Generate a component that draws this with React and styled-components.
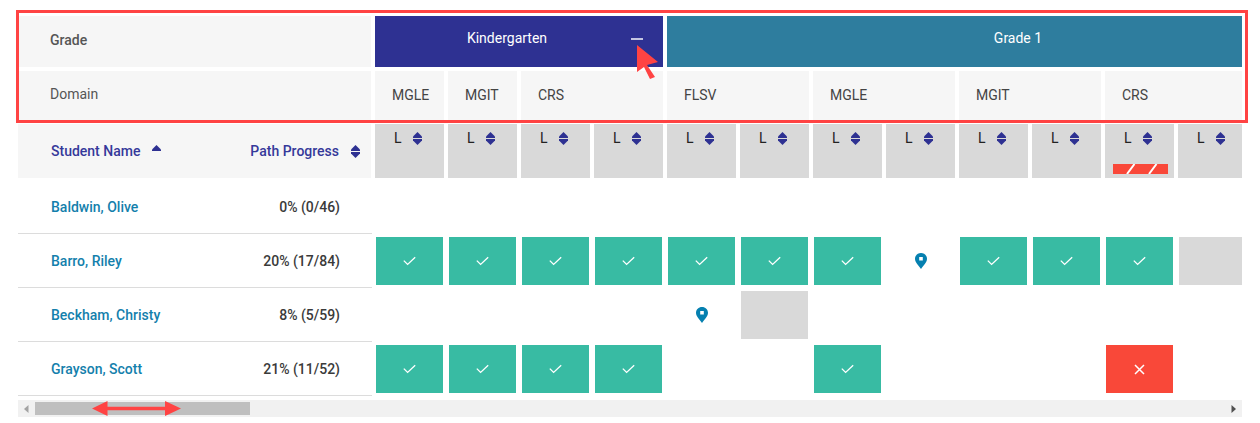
import React from "react";
import styled, { createGlobalStyle } from "styled-components";

// only the first twelve level columns are inside the scroll window
const levels = [0, 1, 2, 3, 4, 5, 6, 7, 8, 9, 10, 11];

const domains = [
  { name: "MGLE", span: 1 },
  { name: "MGIT", span: 1 },
  { name: "CRS", span: 2 },
  { name: "FLSV", span: 2 },
  { name: "MGLE", span: 2 },
  { name: "MGIT", span: 2 },
  { name: "CRS", span: 4 },
];

const students = [
  { name: "Baldwin, Olive", progress: "0% (0/46)", cells: [] },
  {
    name: "Barro, Riley",
    progress: "20% (17/84)",
    cells: ["c", "c", "c", "c", "c", "c", "c", "p", "c", "c", "c", "g"],
  },
  {
    name: "Beckham, Christy",
    progress: "8% (5/59)",
    cells: ["", "", "", "", "p", "g"],
  },
  {
    name: "Grayson, Scott",
    progress: "21% (11/52)",
    cells: ["c", "c", "c", "c", "", "", "c", "", "", "", "x"],
  },
];

const GlobalStyle = createGlobalStyle`
  html, body {
    margin: 0;
    background: #fff;
    font-family: Roboto, "Liberation Sans", sans-serif;
    font-size: 14px;
  }
`;

const Page = styled.div`
  position: relative;
  width: 1260px;
  height: 423px;
  padding: 16px 18px 0;
  box-sizing: border-box;
  overflow: hidden;
`;

const Viewport = styled.div`
  width: 1224px;
  overflow: hidden;
`;

const HeadGrid = styled.div`
  display: grid;
  grid-template-columns: 353px repeat(14, 69px);
  grid-template-rows: 51px 49px 54px;
  gap: 4px;
  width: max-content;
`;

const LabelCell = styled.div`
  display: flex;
  align-items: center;
  padding: 0 0 3px 32px;
  background: #f6f6f6;
  color: ${(p) => (p.$strong ? "#555" : "#555")};
  font-weight: ${(p) => (p.$strong ? 500 : 400)};
`;

const GradeCell = styled.div`
  position: relative;
  grid-column: span ${(p) => p.$span};
  display: flex;
  align-items: center;
  justify-content: center;
  padding: 0 24px 7px 0;
  background: ${(p) => p.$color};
  color: #fff;
`;

const Collapse = styled.span`
  position: absolute;
  top: 22px;
  right: 20px;
  width: 12px;
  height: 2px;
  background: rgba(255, 255, 255, 0.72);
`;

const DomainCell = styled.div`
  grid-column: span ${(p) => p.$span};
  display: flex;
  align-items: center;
  padding: 0 0 1px 17px;
  background: #f6f6f6;
  color: #444;
`;

const SortBar = styled.div`
  display: flex;
  align-items: center;
  justify-content: space-between;
  padding: 0 11px 0 33px;
  background: #f6f6f6;
`;

const SortLabel = styled.div`
  display: flex;
  align-items: center;
  gap: 12px;
  color: #35399a;
  font-weight: 500;
`;

const LevelCell = styled.div`
  display: flex;
  flex-direction: column;
  justify-content: space-between;
  padding: 7px 0 4px;
  background: #d9d9d9;
`;

const LevelHead = styled.div`
  display: flex;
  align-items: center;
  gap: 12px;
  padding-left: 19px;
  color: #222;
  line-height: 14px;
`;

const LevelLetter = styled.span`
  width: 7px;
`;

const Rows = styled.div`
  margin-top: 2px;
`;

const Row = styled.div`
  display: grid;
  grid-template-columns: 354px repeat(14, 73px);
  width: max-content;
  height: 54px;
`;

const StudentCell = styled.div`
  display: flex;
  align-items: center;
  justify-content: space-between;
  padding: 0 32px 0 33px;
  border-bottom: 1px solid #dcdcdc;
  font-weight: 500;
`;

const StudentName = styled.span`
  color: #1480ac;
`;

const Progress = styled.span`
  color: #3a3a3a;
`;

const Slot = styled.div`
  display: flex;
  padding: 3px 2px 3px 4px;
`;

const Mark = styled.div`
  flex: 1;
  display: flex;
  align-items: center;
  justify-content: center;
  background: ${(p) => p.$bg};
`;

const Scrollbar = styled.div`
  display: flex;
  align-items: center;
  justify-content: space-between;
  width: 1224px;
  height: 17px;
  margin-top: 4px;
  background: #f1f1f1;
`;

const ScrollLeft = styled.div`
  display: flex;
  align-items: center;
  gap: 6px;
  height: 13px;
  padding-left: 6px;
`;

const Thumb = styled.div`
  width: 215px;
  height: 13px;
  background: #bfbfbf;
`;

const ScrollArrow = styled.svg`
  display: block;
  margin-right: ${(p) => p.$end || 0}px;
`;

const Callout = styled.div`
  position: absolute;
  top: 10px;
  left: 16px;
  width: 1232px;
  height: 113px;
  box-sizing: border-box;
  border: 3px solid #ff4343;
  pointer-events: none;
`;

const Drawn = styled.svg`
  position: absolute;
  top: ${(p) => p.$top}px;
  left: ${(p) => p.$left}px;
`;

const SortIcon = ({ upOnly }) => (
  <svg width="9" height="13" viewBox="0 0 9 13" fill="#2e3192">
    <path d="M4.5 0 L9 4.5 V6 H0 V4.5 Z" />
    {!upOnly && <path d="M0 7 H9 V8.5 L4.5 13 L0 8.5 Z" />}
  </svg>
);

const Check = () => (
  <svg width="13" height="10" viewBox="0 0 13 10" fill="none" stroke="#fff" strokeWidth="1.3">
    <path d="M0.8 4.6 L4.6 8.4 L12.2 1.2" />
  </svg>
);

const Cross = () => (
  <svg width="11" height="11" viewBox="0 0 11 11" fill="none" stroke="#fff" strokeWidth="1.5">
    <path d="M1 1 L10 10 M10 1 L1 10" />
  </svg>
);

const Pin = () => (
  <svg width="12" height="16" viewBox="0 0 12 16">
    <path
      fillRule="evenodd"
      fill="#0580b0"
      d="M6 0 C9.4 0 12 2.6 12 5.8 C12 9.6 8.2 12.6 6 16 C3.8 12.6 0 9.6 0 5.8 C0 2.6 2.6 0 6 0 Z M4.2 4 V7.6 H7.8 V4 Z"
    />
  </svg>
);

const FailStrip = () => (
  <svg width="55" height="10" viewBox="0 0 55 10" style={{ display: "block", marginLeft: 8 }}>
    <rect width="55" height="10" fill="#f94839" />
    <path d="M14 10 L21.5 0 M36 10 L43.5 0" stroke="#fff" strokeWidth="2" />
  </svg>
);

const marks = {
  c: <Mark $bg="#38bba3"><Check /></Mark>,
  p: <Mark $bg="transparent"><Pin /></Mark>,
  g: <Mark $bg="#d9d9d9" />,
  x: <Mark $bg="#f94839"><Cross /></Mark>,
};

export default function App() {
  return (
    <Page>
      <GlobalStyle />
      <Viewport>
        <HeadGrid>
          <LabelCell $strong>Grade</LabelCell>
          <GradeCell $span={4} $color="#2e3192">
            Kindergarten
            <Collapse />
          </GradeCell>
          <GradeCell $span={10} $color="#2e7d9e">Grade 1</GradeCell>

          <LabelCell>Domain</LabelCell>
          {domains.map((d, i) => (
            <DomainCell key={i} $span={d.span}>{d.name}</DomainCell>
          ))}

          <SortBar>
            <SortLabel>Student Name <SortIcon upOnly /></SortLabel>
            <SortLabel>Path Progress <SortIcon /></SortLabel>
          </SortBar>
          {levels.map((l) => (
            <LevelCell key={l}>
              <LevelHead><LevelLetter>L</LevelLetter> <SortIcon /></LevelHead>
              {l === 10 && <FailStrip />}
            </LevelCell>
          ))}
        </HeadGrid>

        <Rows>
          {students.map((s) => (
            <Row key={s.name}>
              <StudentCell>
                <StudentName>{s.name}</StudentName>
                <Progress>{s.progress}</Progress>
              </StudentCell>
              {levels.map((l) => (
                <Slot key={l}>{marks[s.cells[l]]}</Slot>
              ))}
            </Row>
          ))}
        </Rows>
      </Viewport>

      <Scrollbar>
        <ScrollLeft>
          <ScrollArrow width="5" height="8" viewBox="0 0 5 8">
            <path d="M4.5 0 V8 L0 4 Z" fill="#a3a3a3" />
          </ScrollArrow>
          <Thumb />
        </ScrollLeft>
        <ScrollArrow width="5" height="8" viewBox="0 0 5 8" $end={6}>
          <path d="M0.5 0 V8 L5 4 Z" fill="#505050" />
        </ScrollArrow>
      </Scrollbar>

      <Callout />
      <Drawn $top={44} $left={636} width="24" height="36" viewBox="636 44 24 36">
        <path d="M637 45 L658 62 L647 65 L655 77 L650 79 L644 67 L637 72 Z" fill="#ff4343" />
      </Drawn>
      <Drawn $top={400} $left={91} width="92" height="17" viewBox="91 400 92 17">
        <path
          d="M92 408.5 L107.5 401 V406.8 H165 V401 L181 408.5 L165 416 V410.2 H107.5 V416 Z"
          fill="#ff4343"
        />
      </Drawn>
    </Page>
  );
}
